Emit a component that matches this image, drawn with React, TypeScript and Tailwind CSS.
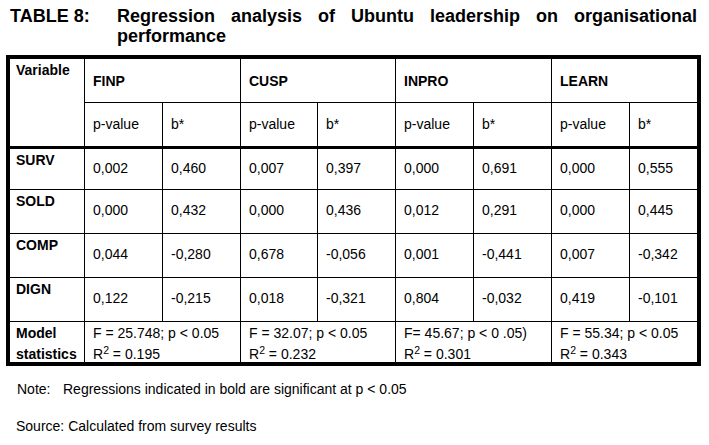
const FONT = "font-['Liberation_Sans',Arial,sans-serif]"

const GROUPS = ['FINP', 'CUSP', 'INPRO', 'LEARN']

const ROWS: { label: string; h: string; values: string[] }[] = [
  { label: 'SURV', h: 'h-[41px]', values: ['0,002', '0,460', '0,007', '0,397', '0,000', '0,691', '0,000', '0,555'] },
  { label: 'SOLD', h: 'h-[44px]', values: ['0,000', '0,432', '0,000', '0,436', '0,012', '0,291', '0,000', '0,445'] },
  { label: 'COMP', h: 'h-[44px]', values: ['0,044', '-0,280', '0,678', '-0,056', '0,001', '-0,441', '0,007', '-0,342'] },
  { label: 'DIGN', h: 'h-[44px]', values: ['0,122', '-0,215', '0,018', '-0,321', '0,804', '-0,032', '0,419', '-0,101'] },
]

const MODEL = [
  { f: 'F = 25.748; p < 0.05', r: '0.195' },
  { f: 'F = 32.07; p < 0.05', r: '0.232' },
  { f: 'F= 45.67; p < 0 .05)', r: '0.301' },
  { f: 'F = 55.34; p < 0.05', r: '0.343' },
]

export default function App() {
  return (
    <div className={`${FONT} w-[709px] h-[445px] bg-white text-black`}>
      {/* caption */}
      <div className="flex w-[697px] pl-[10px] pt-[6px] text-[18px] font-bold leading-[20px]">
        <div className="w-[107px] shrink-0">TABLE 8:</div>
        <div className="flex-1 text-justify">
          Regression analysis of Ubuntu leadership on organisational performance
        </div>
      </div>

      {/* table */}
      <div className="ml-[6px] mt-[9px] w-[695px] border-[4px] border-black text-[14px] leading-[16px]">
        <div className="grid grid-cols-[75px_78px_78px_77px_78px_78px_78px_78px_67px] grid-rows-[44px_46px]">
          <div className="row-span-2 border-r border-b-[3px] border-black pl-[6px] pt-[3px] font-bold">Variable</div>
          {GROUPS.map((g, i) => (
            <div
              key={g}
              className={`col-span-2 flex items-center border-b border-black pl-[8px] font-bold ${i < 3 ? 'border-r' : ''}`}
            >
              {g}
            </div>
          ))}
          {GROUPS.flatMap((g, i) => [
            <div key={g + 'p'} className="flex items-center border-r border-b-[3px] border-black pl-[8px] pb-[2px]">
              p-value
            </div>,
            <div
              key={g + 'b'}
              className={`flex items-center border-b-[3px] border-black pl-[8px] pb-[2px] ${i < 3 ? 'border-r' : ''}`}
            >
              b*
            </div>,
          ])}
        </div>

        {ROWS.map((row) => (
          <div
            key={row.label}
            className={`grid grid-cols-[75px_78px_78px_77px_78px_78px_78px_78px_67px] border-b border-black ${row.h}`}
          >
            <div className="border-r border-black pl-[6px] pt-[3px] font-bold">{row.label}</div>
            {row.values.map((v, i) => (
              <div
                key={i}
                className={`flex items-center border-black pl-[8px] pb-[3px] ${i < 7 ? 'border-r' : ''}`}
              >
                {v}
              </div>
            ))}
          </div>
        ))}

        <div className="grid h-[40px] grid-cols-[75px_156px_155px_156px_145px]">
          <div className="border-r border-black pl-[6px] pt-[1px] font-bold">
            <div className="leading-[20px]">Model</div>
            <div className="leading-[22px]">statistics</div>
          </div>
          {MODEL.map((m, i) => (
            <div key={i} className={`border-black pl-[8px] pt-[1px] ${i < 3 ? 'border-r' : ''}`}>
              <div className="leading-[20px]">{m.f}</div>
              <div className="leading-[22px]">
                R<sup>2</sup> = {m.r}
              </div>
            </div>
          ))}
        </div>
      </div>

      {/* notes */}
      <div className="mt-[13px] flex pl-[17px] text-[14px] leading-[20px]">
        <span className="w-[46px] shrink-0">Note:</span>
        <span>Regressions indicated in bold are significant at p &lt; 0.05</span>
      </div>
      <div className="mt-[17px] pl-[16px] text-[14px] leading-[20px]">Source: Calculated from survey results</div>
    </div>
  )
}
